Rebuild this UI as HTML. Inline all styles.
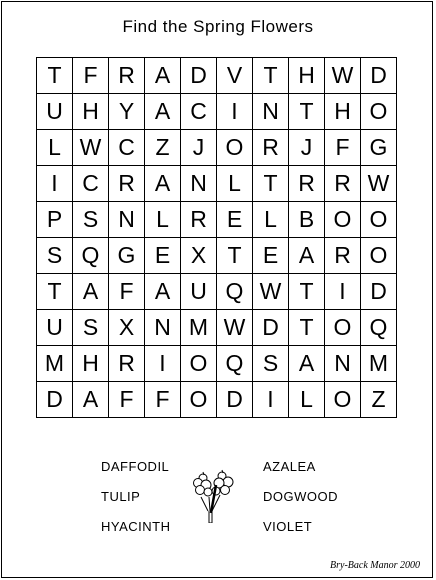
<!DOCTYPE html>
<html><head><style>
body{margin:0;background:#fff;width:436px;height:580px;position:relative;overflow:hidden;font-family:"Liberation Sans",sans-serif;color:#000}
.frame{position:absolute;left:1px;top:1px;width:430px;height:575px;border:1px solid #000}
.title{position:absolute;left:0;width:436px;top:17px;text-align:center;font-size:17px;letter-spacing:0.5px}
table{position:absolute;left:36px;top:57px;border-collapse:collapse}
td{width:35px;height:35px;border:1px solid #000;text-align:center;font-size:23px;padding:0;line-height:35px}
.w{position:absolute;font-size:13px;letter-spacing:0.5px}
.sig{position:absolute;left:330px;top:560px;font-size:10px;font-style:italic;font-family:"Liberation Serif",serif}
</style></head><body>
<div class="frame"></div>
<div class="title">Find the Spring Flowers</div>
<table>
<tr><td>T</td><td>F</td><td>R</td><td>A</td><td>D</td><td>V</td><td>T</td><td>H</td><td>W</td><td>D</td></tr>
<tr><td>U</td><td>H</td><td>Y</td><td>A</td><td>C</td><td>I</td><td>N</td><td>T</td><td>H</td><td>O</td></tr>
<tr><td>L</td><td>W</td><td>C</td><td>Z</td><td>J</td><td>O</td><td>R</td><td>J</td><td>F</td><td>G</td></tr>
<tr><td>I</td><td>C</td><td>R</td><td>A</td><td>N</td><td>L</td><td>T</td><td>R</td><td>R</td><td>W</td></tr>
<tr><td>P</td><td>S</td><td>N</td><td>L</td><td>R</td><td>E</td><td>L</td><td>B</td><td>O</td><td>O</td></tr>
<tr><td>S</td><td>Q</td><td>G</td><td>E</td><td>X</td><td>T</td><td>E</td><td>A</td><td>R</td><td>O</td></tr>
<tr><td>T</td><td>A</td><td>F</td><td>A</td><td>U</td><td>Q</td><td>W</td><td>T</td><td>I</td><td>D</td></tr>
<tr><td>U</td><td>S</td><td>X</td><td>N</td><td>M</td><td>W</td><td>D</td><td>T</td><td>O</td><td>Q</td></tr>
<tr><td>M</td><td>H</td><td>R</td><td>I</td><td>O</td><td>Q</td><td>S</td><td>A</td><td>N</td><td>M</td></tr>
<tr><td>D</td><td>A</td><td>F</td><td>F</td><td>O</td><td>D</td><td>I</td><td>L</td><td>O</td><td>Z</td></tr>
</table>
<div class="w" style="left:101px;top:459px">DAFFODIL</div>
<div class="w" style="left:101px;top:489px">TULIP</div>
<div class="w" style="left:101px;top:519px">HYACINTH</div>
<div class="w" style="left:263px;top:459px">AZALEA</div>
<div class="w" style="left:263px;top:489px">DOGWOOD</div>
<div class="w" style="left:263px;top:519px">VIOLET</div>
<svg style="position:absolute;left:192px;top:469px" width="44" height="54" viewBox="0 0 44 54" fill="none" stroke="#000" stroke-width="1">
<path d="M9 28l7 14M28 26l-8 16M17 28l1 14"/>
<circle cx="11" cy="9" r="4" fill="#fff"/><circle cx="6" cy="14" r="4.5" fill="#fff"/><circle cx="14" cy="16" r="5" fill="#fff"/><circle cx="8" cy="21" r="4.5" fill="#fff"/><circle cx="16" cy="23" r="4" fill="#fff"/>
<circle cx="30" cy="7" r="4" fill="#fff"/><circle cx="36" cy="13" r="5" fill="#fff"/><circle cx="27" cy="14" r="5" fill="#fff"/><circle cx="33" cy="21" r="4.5" fill="#fff"/><circle cx="24" cy="22" r="4" fill="#fff"/>
<path d="M11 3l1 3M30 1l1 3"/>
<path d="M17 42v12h3v-12"/><path d="M24 16l-5 28" stroke-width="2.5"/>
</svg>
<div class="sig">Bry-Back Manor 2000</div>
</body></html>
